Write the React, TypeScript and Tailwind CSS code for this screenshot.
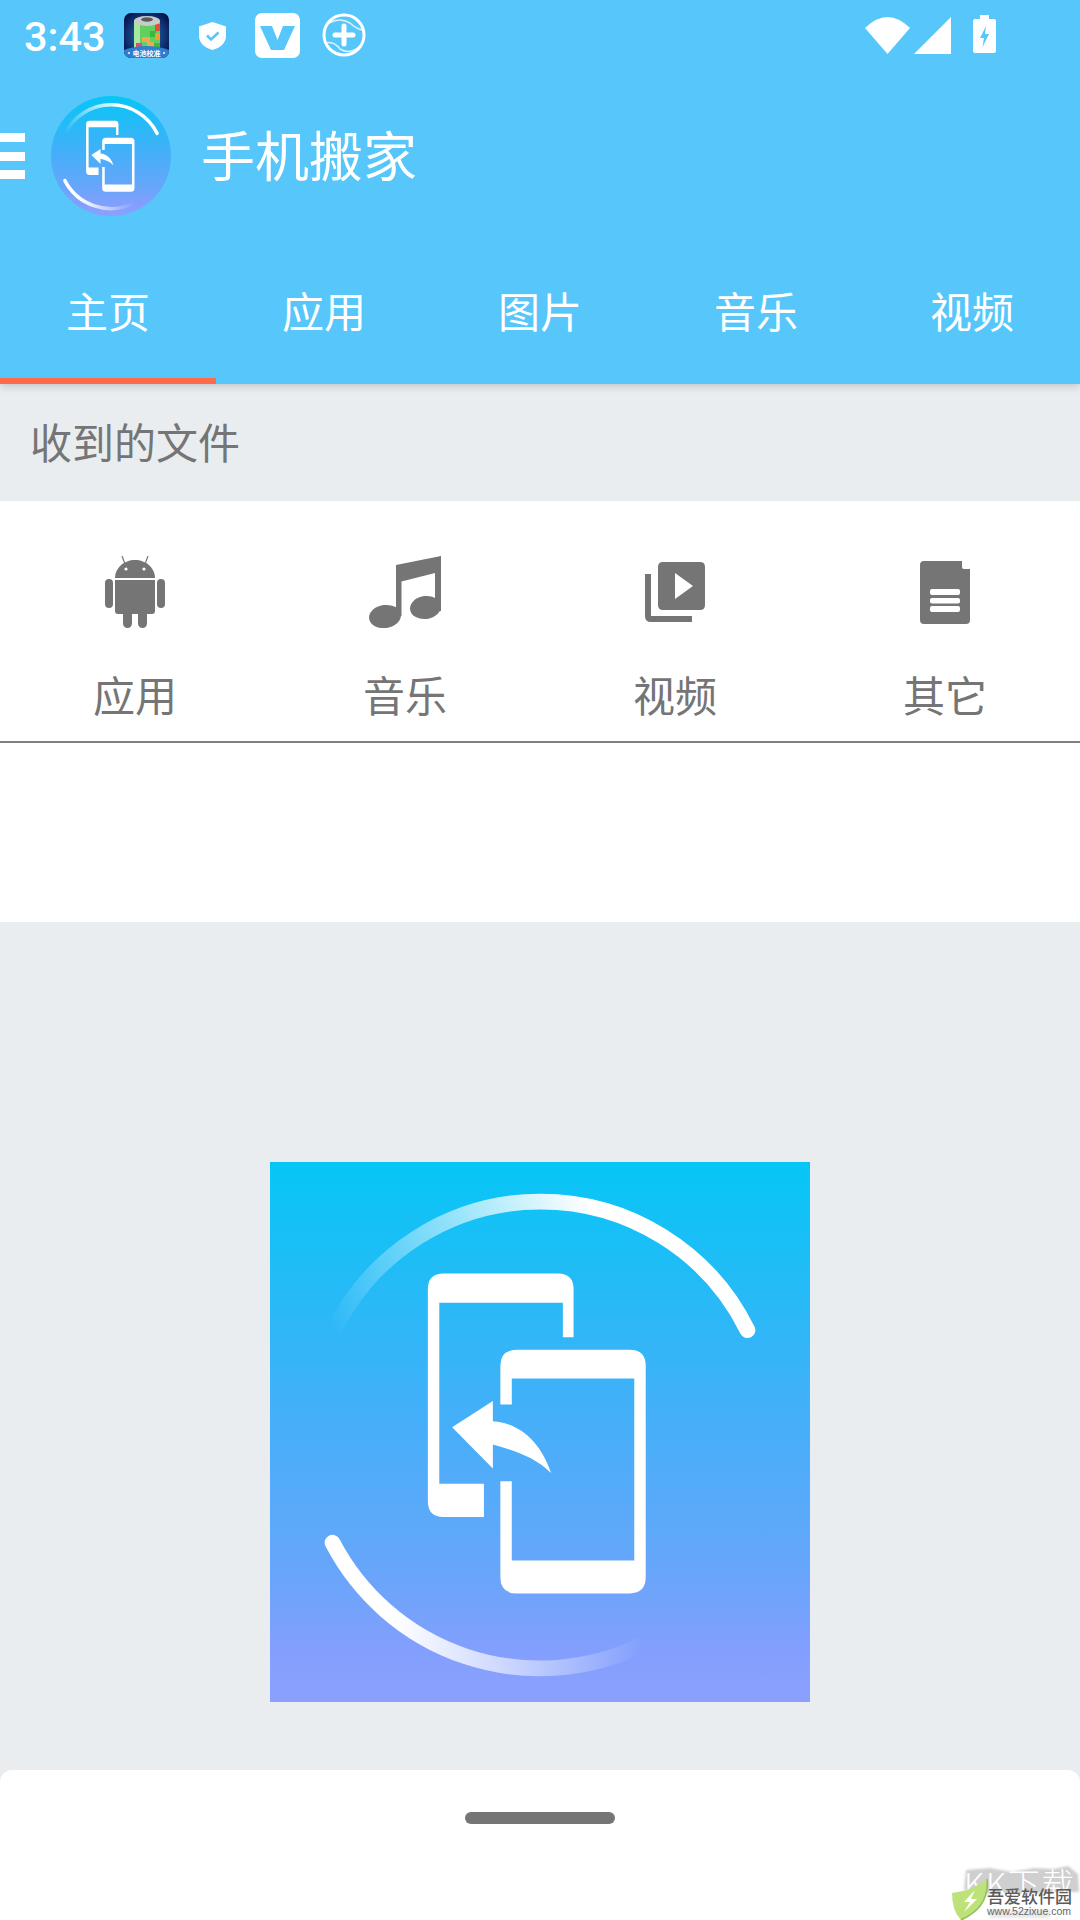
import React from 'react';

const cjk = { fontFamily: '"Noto Sans CJK SC", "Noto Sans", sans-serif' };

const tabs = ['主页', '应用', '图片', '音乐', '视频'];

const AppLogo: React.FC<{ id: string; round?: boolean; className: string }> = ({ id, round, className }) => (
  <svg viewBox="28 34 1512 1512" className={className}>
    <defs>
      <linearGradient id={`${id}-bg`} x1="0" y1="0" x2="0" y2="1">
        <stop offset="0" stopColor="#06c6f5" />
        <stop offset="0.45" stopColor="#42b0f9" />
        <stop offset="0.75" stopColor="#66a6fa" />
        <stop offset="0.9" stopColor="#829ffd" />
        <stop offset="1" stopColor="#8ca0fe" />
      </linearGradient>
      <linearGradient id={`${id}-top`} gradientUnits="userSpaceOnUse" x1="205" y1="510" x2="920" y2="150">
        <stop offset="0" stopColor="#fff" stopOpacity="0" />
        <stop offset="0.6" stopColor="#fff" stopOpacity="0.6" />
        <stop offset="1" stopColor="#fff" />
      </linearGradient>
      <linearGradient id={`${id}-bottom`} gradientUnits="userSpaceOnUse" x1="1070" y1="1400" x2="380" y2="1300">
        <stop offset="0" stopColor="#fff" stopOpacity="0" />
        <stop offset="0.5" stopColor="#fff" stopOpacity="0.55" />
        <stop offset="1" stopColor="#fff" />
      </linearGradient>
    </defs>
    {round ? <circle cx="784" cy="790" r="756" fill={`url(#${id}-bg)`} /> : <rect x="28" y="34" width="1512" height="1512" fill={`url(#${id}-bg)`} />}
    <path d="M205 510 A645 645 0 0 1 1365 505" fill="none" stroke={`url(#${id}-top)`} strokeWidth="44" strokeLinecap="round" />
    <path d="M203 1100 A654 654 0 0 0 1065 1388" fill="none" stroke={`url(#${id}-bottom)`} strokeWidth="44" strokeLinecap="round" />
    <path
      fill="#fff"
      d="M470 390 Q470 346 514 346 H834 Q878 346 878 390 V525 H848 V428 H502 V935 H627 V1028 H514 Q470 1028 470 984 Z"
    />
    <path
      fill="#fff"
      fillRule="evenodd"
      d="M673 713 V605 Q673 560 718 560 H1035 Q1080 560 1080 605 V1197 Q1080 1242 1035 1242 H718 Q673 1242 673 1197 V928 H705 V1150 H1048 V640 H705 V713 Z"
    />
    <path fill="#fff" d="M538 777 L652 703 V760 C725 765 785 815 815 905 C770 860 710 842 652 825 V892 Z" />
  </svg>
);

const BatteryAppIcon = () => (
  <svg viewBox="0 0 45 45" className="w-[45px] h-[45px]">
    <defs>
      <radialGradient id="bat-bg" cx="0.5" cy="0.5" r="0.62">
        <stop offset="0" stopColor="#2a7cc8" />
        <stop offset="1" stopColor="#04124a" />
      </radialGradient>
      <clipPath id="bat-clip">
        <rect width="45" height="45" rx="7" />
      </clipPath>
    </defs>
    <g clipPath="url(#bat-clip)">
      <rect width="45" height="45" fill="url(#bat-bg)" />
      <rect x="10" y="8" width="26" height="28" fill="#62d060" />
      <rect x="10" y="8" width="6" height="28" fill="#a9e8a0" />
      <rect x="31" y="11" width="5" height="7" fill="#e0503c" />
      <rect x="26" y="18" width="6" height="6" fill="#38b83c" />
      <rect x="31" y="20" width="5" height="7" fill="#f0a030" />
      <rect x="18" y="24" width="8" height="5" fill="#f2a65a" />
      <rect x="23" y="29" width="7" height="6" fill="#e8b04a" />
      <rect x="12" y="30" width="6" height="6" fill="#d8507a" />
      <rect x="30" y="30" width="6" height="5" fill="#46b63c" />
      <ellipse cx="23" cy="8" rx="13" ry="5" fill="#c9cdc9" />
      <ellipse cx="23" cy="6.5" rx="6" ry="2.2" fill="#5a5a5a" />
      <path d="M0 37 Q11 33 22.5 33 Q34 33 45 37 V45 H0 Z" fill="#2f7ed0" />
      <circle cx="5" cy="40" r="1" fill="#fff" />
      <text x="22.5" y="42.5" textAnchor="middle" fontSize="7" fontWeight="700" fill="#fff">电池校准</text>
      <circle cx="40" cy="40" r="1" fill="#fff" />
    </g>
  </svg>
);

const AndroidIcon = () => (
  <svg viewBox="0 0 60 72" className="w-[60px] h-[72px]" fill="#757575">
    <path d="M10 22 C10 12 19 4 30 4 C41 4 50 12 50 22 Z" />
    <path d="M17 0 L20 8 M43 0 L40 8" stroke="#757575" strokeWidth="1.2" />
    <circle cx="21" cy="13" r="1.6" fill="#fff" />
    <circle cx="39" cy="13" r="1.6" fill="#fff" />
    <path d="M10 24 H50 V55 Q50 58 47 58 H13 Q10 58 10 55 Z" />
    <rect x="0" y="23" width="8" height="29" rx="4" />
    <rect x="52" y="23" width="8" height="29" rx="4" />
    <rect x="18" y="54" width="9" height="18" rx="4.5" />
    <rect x="33" y="54" width="9" height="18" rx="4.5" />
  </svg>
);

const MusicIcon = () => (
  <svg viewBox="0 0 72 72" className="w-[72px] h-[72px]" fill="#757575">
    <path d="M27 9 L72 0 V55 H66 V17 L32.5 25.6 V60 H27 Z" />
    <ellipse cx="16" cy="60.5" rx="16" ry="11.5" transform="rotate(-8 16 60.5)" />
    <ellipse cx="56.5" cy="51.5" rx="15.5" ry="11.5" transform="rotate(-8 56.5 51.5)" />
  </svg>
);

const VideoIcon = () => (
  <svg viewBox="0 0 60 60" className="w-[60px] h-[60px]" fill="#757575">
    <path d="M0 12 H6 V54 H47 V60 H6 Q0 60 0 54 Z" />
    <path
      fillRule="evenodd"
      d="M18 0 H55 Q60 0 60 5 V43 Q60 48 55 48 H18 Q13 48 13 43 V5 Q13 0 18 0 Z M30 11 V37 L48 24 Z"
    />
  </svg>
);

const DocIcon = () => (
  <svg viewBox="0 0 50 63" className="w-[50px] h-[63px]" fill="#757575">
    <path d="M4 0 H42 V6 Q42 8 44 8 H50 V59 Q50 63 46 63 H4 Q0 63 0 59 V4 Q0 0 4 0 Z" />
    <rect x="10" y="28" width="30" height="6" rx="2" fill="#fff" />
    <rect x="10" y="37" width="30" height="5.5" rx="2" fill="#fff" />
    <rect x="10" y="45" width="30" height="6" rx="2" fill="#fff" />
  </svg>
);

const shortcuts = [
  { label: '应用', icon: <AndroidIcon /> },
  { label: '音乐', icon: <MusicIcon /> },
  { label: '视频', icon: <VideoIcon /> },
  { label: '其它', icon: <DocIcon /> },
];

const StatusBar = () => (
  <div className="h-[72px] flex items-start">
    <span className="ml-[24px] mt-[13px] text-[41.5px] leading-[48px] font-medium text-white" style={{ fontFamily: 'Roboto, sans-serif' }}>
      3:43
    </span>
    <div className="ml-[18px] mt-[13px]">
      <BatteryAppIcon />
    </div>
    <svg viewBox="0 0 27 28" className="ml-[30px] mt-[22px] w-[27px] h-[28px]">
      <path d="M13.5 0 L27 4.5 V14 C27 21 21 26 13.5 28 C6 26 0 21 0 14 V4.5 Z" fill="#fff" />
      <path d="M8 13.5 L12 17.5 L19.5 10.5" fill="none" stroke="#56c6fb" strokeWidth="2.6" />
    </svg>
    <svg viewBox="0 0 45 45" className="ml-[29px] mt-[13px] w-[45px] h-[45px]">
      <rect width="45" height="45" rx="7" fill="#fff" />
      <path d="M5 13 H17 L22.5 27 L28 13 H40 L29 37 H16 Z" fill="#56c6fb" />
    </svg>
    <svg viewBox="0 0 44 44" className="ml-[22px] mt-[13px] w-[44px] h-[44px]" fill="none" stroke="#fff">
      <circle cx="22" cy="22" r="20" strokeWidth="3" />
      <path d="M4 30 Q12 28 18 36 Q28 42 38 33" strokeWidth="1.5" opacity="0.8" />
      <path d="M7 10 Q18 4 28 10 Q34 16 41 17" strokeWidth="1.5" opacity="0.8" />
      <path d="M22 13 V31 M13 22 H31" strokeWidth="5" strokeLinecap="round" />
    </svg>
    <div className="ml-auto mr-[84px] mt-[15px] flex items-start">
      <svg viewBox="0 0 45 37" className="mt-[2px] w-[45px] h-[37px]" fill="#fff">
        <path d="M0 11 Q22.5 -11 45 11 L22.5 37 Z" />
      </svg>
      <svg viewBox="0 0 37 37" className="ml-[4px] mt-[2px] w-[37px] h-[37px]" fill="#fff">
        <path d="M0 37 L37 0 V37 Z" />
      </svg>
      <svg viewBox="0 0 23 38" className="ml-[22px] w-[23px] h-[38px]" fill="#fff">
        <path fillRule="evenodd" d="M7 0 H16 V4 H21 Q23 4 23 6 V36 Q23 38 21 38 H2 Q0 38 0 36 V6 Q0 4 2 4 H7 Z M13 11 L7 23 H11 L9.5 32 L16 19 H12 Z" />
      </svg>
    </div>
  </div>
);

export default function App() {
  return (
    <div className="relative w-[1080px] h-[1920px] overflow-hidden flex flex-col bg-[#e9edf0]" style={cjk}>
      <header className="relative z-10 bg-[#56c6fb] shadow-[0_2px_8px_rgba(0,0,0,0.18)]">
        <StatusBar />
        <div className="h-[168px] flex items-center">
          <div className="w-[25px] h-[46px] flex flex-col justify-between">
            <div className="h-[9px] bg-white" />
            <div className="h-[9px] bg-white" />
            <div className="h-[9px] bg-white" />
          </div>
          <AppLogo id="small" round className="ml-[26px] w-[120px] h-[120px]" />
          <span className="ml-[30px] mb-[4px] text-[54px] text-white leading-none">手机搬家</span>
        </div>
        <nav className="h-[144px] grid grid-cols-5">
          {tabs.map((tab, i) => (
            <div key={tab} className={`flex items-center justify-center text-[42px] text-white pb-[5px] ${i === 0 ? 'border-b-[6px] border-[#ff6b4a] pt-[6px]' : ''}`}>
              {tab}
            </div>
          ))}
        </nav>
      </header>

      <div className="h-[117px] flex items-center pl-[30px] pb-[4px] text-[42px] text-[#757575]">收到的文件</div>

      <section className="h-[421px] bg-white">
        <div className="h-[242px] grid grid-cols-4 border-b-2 border-[#808080]">
          {shortcuts.map(item => (
            <div key={item.label} className="flex flex-col items-center">
              <div className="mt-[55px] h-[72px] flex items-center justify-center">{item.icon}</div>
              <span className="mt-[36px] text-[42px] leading-[60px] text-[#757575]">{item.label}</span>
            </div>
          ))}
        </div>
      </section>

      <main className="h-[848px] pt-[240px] flex justify-center">
        <AppLogo id="large" className="w-[540px] h-[540px]" />
      </main>

      <footer className="relative h-[150px] bg-white rounded-t-[12px] flex justify-center pt-[42px]">
        <div className="w-[150px] h-[12px] rounded-full bg-[#757575]" />
        {/* watermark */}
        <div className="absolute right-0 bottom-0 w-[130px] h-[60px]">
          <svg viewBox="0 0 130 60" className="absolute left-0 top-0 w-[130px] h-[60px] blur-[1px]">
            <path d="M16 10 L40 8 L62 12 L84 8 L104 9 L118 6 L128 14 L129 32 L36 34 L14 30 Z" fill="#cfcfcf" />
            <path d="M40 50 H100 V58 H40 Z" fill="#e9e9e9" />
          </svg>
          <span className="absolute left-[14px] top-[4px] text-[32px] leading-[36px] tracking-[2px] font-light text-white whitespace-nowrap">KK下载</span>
          <svg viewBox="0 0 36 41" className="absolute left-[2px] top-[19px] w-[36px] h-[41px]">
            <path d="M0 14 Q20 12 35 0 Q38 28 9 41 Q0 32 0 14 Z" fill="#bde27a" />
            <path d="M35 0 Q38 28 9 41" fill="none" stroke="#8fbf5a" strokeWidth="1.5" />
            <path d="M23 11 L12 23 H18 L12 33 L25 20 H19 Z" fill="#fff" />
          </svg>
          <span className="absolute left-[37px] top-[26px] text-[17px] leading-[20px] font-medium text-[#5a5a5a] whitespace-nowrap">吾爱软件园</span>
          <span className="absolute left-[37px] top-[45px] text-[10.5px] leading-[12px] text-[#666] whitespace-nowrap" style={{ fontFamily: '"Liberation Sans", sans-serif' }}>www.52zixue.com</span>
        </div>
      </footer>
    </div>
  );
}
